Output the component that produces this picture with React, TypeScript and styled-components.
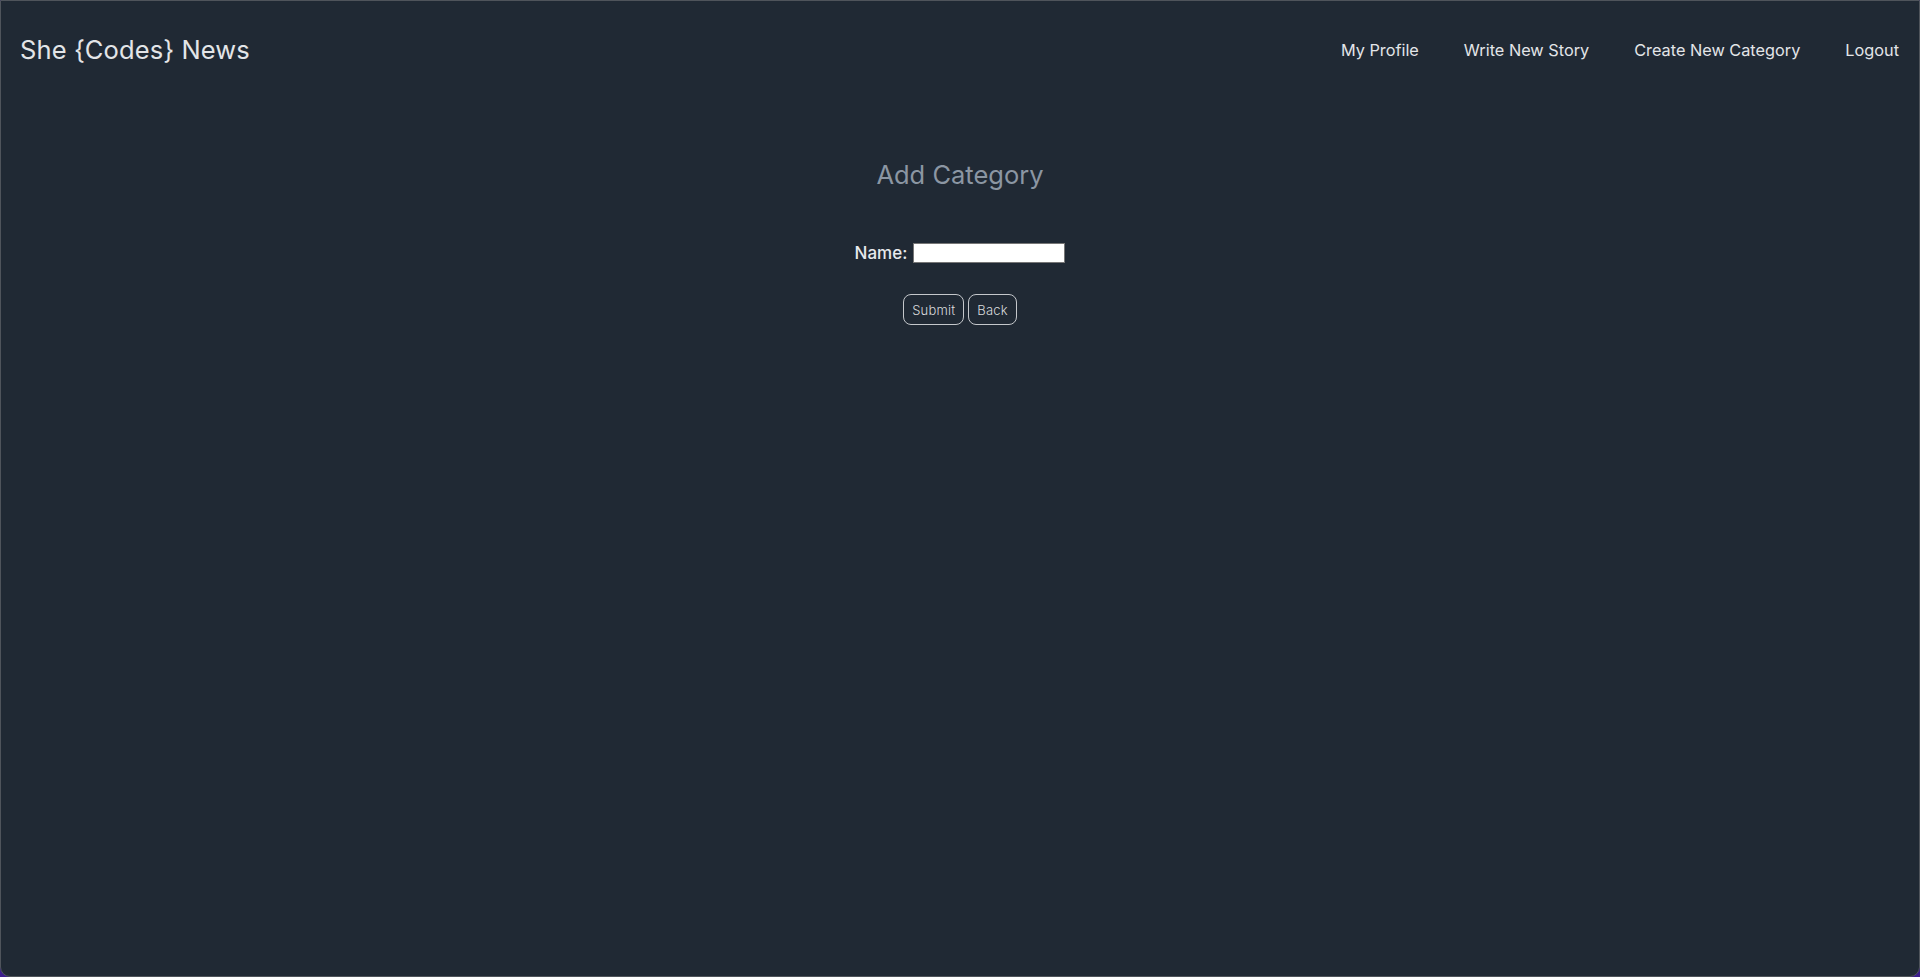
import React from "react";
import styled, { createGlobalStyle } from "styled-components";

const Global = createGlobalStyle`
  html, body { margin: 0; padding: 0; height: 100%; }
  body { background: #3b1c8c; font-family: "Inter", "Liberation Sans", sans-serif; }
  #root { height: 100%; }
`;

const Frame = styled.div`
  box-sizing: border-box;
  height: 977px;
  background: #202934;
  border: 1px solid #4f545b;
  border-radius: 0 0 10px 10px;
  overflow: hidden;
`;

const Header = styled.header`
  display: flex;
  align-items: center;
  justify-content: space-between;
  height: 97px;
  padding: 0 20px 0 19px;
`;

const Brand = styled.div`
  color: #e3e5e8;
  font-family: "Inter", sans-serif;
  font-size: 25.5px;
  font-weight: 400;
  letter-spacing: 0.1px;
`;

const Nav = styled.nav`
  display: flex;
  gap: 45px;
`;

const NavLink = styled.a`
  color: #e3e5e8;
  font-family: "Inter", sans-serif;
  font-size: 16.3px;
  font-weight: 400;
  text-decoration: none;
`;

const Main = styled.main`
  display: flex;
  flex-direction: column;
  align-items: center;
`;

const Title = styled.h2`
  margin: 61px 0 0;
  color: #8b96a3;
  font-family: "Inter", sans-serif;
  font-size: 25.5px;
  font-weight: 400;
`;

const Form = styled.form`
  display: flex;
  flex-direction: column;
  align-items: center;
  margin-top: 53px;
`;

const Row = styled.div`
  display: flex;
  align-items: center;
  gap: 6px;
`;

const Label = styled.label`
  color: #e8eaed;
  font-family: "Inter", sans-serif;
  font-size: 17px;
  font-weight: 500;
`;

const Input = styled.input`
  box-sizing: border-box;
  width: 152px;
  height: 20px;
  border: 1px solid #767676;
  background: #fff;
  padding: 1px 2px;
`;

const Buttons = styled.div`
  display: flex;
  gap: 4px;
  margin-top: 31px;
`;

const Button = styled.button`
  box-sizing: border-box;
  height: 31px;
  padding: 0 8px;
  background: transparent;
  color: #d8dadd;
  border: 1px solid #c4c7cb;
  border-radius: 8px;
  font-family: "Inter", sans-serif;
  font-size: 13px;
  font-weight: 300;
  letter-spacing: 0.2px;
`;

export default function App() {
  return (
    <>
      <Global />
      <Frame>
        <Header>
          <Brand>She {"{Codes}"} News</Brand>
          <Nav>
            <NavLink href="#">My Profile</NavLink>
            <NavLink href="#">Write New Story</NavLink>
            <NavLink href="#">Create New Category</NavLink>
            <NavLink href="#">Logout</NavLink>
          </Nav>
        </Header>
        <Main>
          <Title>Add Category</Title>
          <Form onSubmit={(e) => e.preventDefault()}>
            <Row>
              <Label htmlFor="name">Name:</Label>
              <Input id="name" type="text" />
            </Row>
            <Buttons>
              <Button type="submit">Submit</Button>
              <Button type="button">Back</Button>
            </Buttons>
          </Form>
        </Main>
      </Frame>
    </>
  );
}
